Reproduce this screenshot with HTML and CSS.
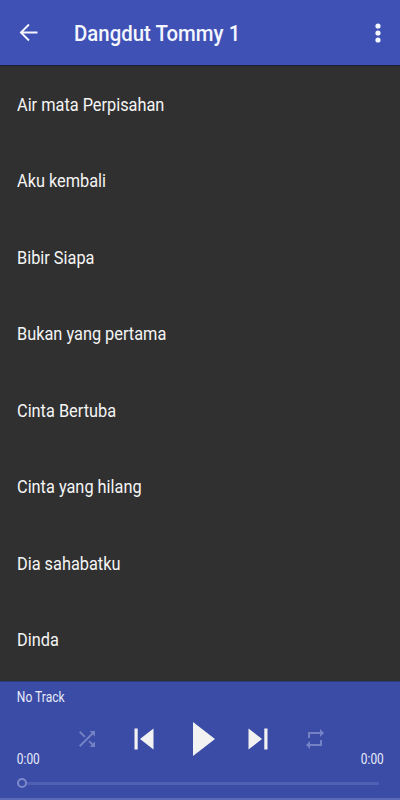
FILE: index.html
```html
<!DOCTYPE html>
<html lang="id">
<head>
  <meta charset="UTF-8" />
  <meta name="viewport" content="width=device-width, initial-scale=1.0" />
  <title>Dangdut Tommy 1</title>
  <link rel="stylesheet" href="styles.css">
</head>
<body>
  <div class="app">
    <header class="toolbar">
      <svg class="back" width="27" height="27" viewBox="0 0 24 24"><path d="M20 11.100H7.400l5.600-5.600-1.200-1.200L4.100 12l7.700 7.700 1.200-1.200-5.600-5.600H20z"/></svg>
      <h1 class="title"><span>Dangdut Tommy 1</span></h1>
      <svg class="more" width="24" height="24" viewBox="0 0 24 24"><circle cx="12" cy="5" r="2.600"/><circle cx="12" cy="12" r="2.600"/><circle cx="12" cy="19" r="2.600"/></svg>
    </header>

    <ul class="tracks">
      <li><span>Air mata Perpisahan</span></li>
      <li><span>Aku kembali</span></li>
      <li><span>Bibir Siapa</span></li>
      <li><span>Bukan yang pertama</span></li>
      <li><span>Cinta Bertuba</span></li>
      <li><span>Cinta yang hilang</span></li>
      <li><span>Dia sahabatku</span></li>
      <li><span>Dinda</span></li>
    </ul>

    <footer class="player">
      <div class="now">No Track</div>
      <div class="controls">
        <span class="time">0:00</span>
        <div class="buttons">
          <div class="cell"><svg class="dim" width="24" height="24" viewBox="0 0 24 24"><path d="M10.590 9.170L5.410 4 4 5.410l5.170 5.170 1.420-1.410zM14.500 4l2.040 2.040L4 18.590 5.410 20 17.960 7.460 20 9.500V4h-5.500zm.33 9.410l-1.410 1.410 3.130 3.130L14.500 20H20v-5.500l-2.040 2.040-3.130-3.130z"/></svg></div>
          <div class="cell"><svg width="24" height="24" viewBox="0 0 24 24"><path d="M2.500 1.500h3.200v21H2.500zM8 12L21.500 1.500v21z"/></svg></div>
          <div class="cell"><svg class="play" width="24" height="36" viewBox="0 0 24 36"><path d="M1 1l22 17L1 35z"/></svg></div>
          <div class="cell"><svg width="24" height="24" viewBox="0 0 24 24"><path d="M2.500 1.500L16 12 2.500 22.500zM18.300 1.500h3.200v21h-3.200z"/></svg></div>
          <div class="cell"><svg class="dim" width="24" height="24" viewBox="0 0 24 24"><path d="M7 7h10v3l4-4-4-4v3H5v6h2V7zm10 10H7v-3l-4 4 4 4v-3h12v-6h-2v4z"/></svg></div>
        </div>
        <span class="time">0:00</span>
      </div>
      <div class="seek">
        <span class="thumb"></span>
        <span class="rail"></span>
      </div>
    </footer>
  </div>
</body>
</html>
```

FILE: styles.css
```css
* {
  box-sizing: border-box;
}
body {
  margin: 0;
  font-family: Roboto, "Noto Sans", sans-serif;
  background-color: #303030;
}
.app {
  display: flex;
  flex-direction: column;
  height: 800px;
  overflow: hidden;
}
.toolbar {
  display: flex;
  align-items: center;
  flex: none;
  height: 65px;
  padding: 0 10px 0 15px;
  background-color: #3f51b5;
  color: #f4f6ff;
  box-shadow: 0 1px 1px rgba(20, 30, 60, 0.8);
}
.toolbar svg {
  fill: #f4f6ff;
  flex: none;
}
.title {
  flex: 1;
  margin: 2px 0 0 32px;
  font-size: 22px;
  font-weight: 500;
}
/* the reference text is narrower than Roboto at this height */
.title span {
  display: inline-block;
  transform: scaleX(0.927);
  transform-origin: left;
}
.tracks {
  flex: 1;
  margin: 0;
  padding: 1px 0 0;
  list-style: none;
  color: #f5f5f5;
  font-size: 18px;
}
.tracks li {
  display: flex;
  align-items: center;
  height: 76.5px;
  padding-left: 17px;
}
.tracks span {
  transform: scaleX(0.907);
  transform-origin: left;
}
.player {
  flex: none;
  height: 119px;
  padding: 7px 16px 0 16px;
  background-color: #3b4ca6;
  border-top: 1px solid #2b3a78;
  border-bottom: 2px solid #5a69b8;
  color: #e8ebfa;
}
.now {
  padding-left: 1px;
  font-size: 14px;
  line-height: 16px;
  transform: scaleX(0.86);
  transform-origin: left;
}
.controls {
  display: flex;
  align-items: flex-end;
  justify-content: space-between;
  height: 62px;
}
.time {
  width: 24px;
  padding-left: 1px;
  font-size: 14px;
  line-height: 16px;
  transform: scaleX(0.85);
  transform-origin: left;
}
.buttons {
  display: flex;
  align-self: flex-start;
  height: 60px;
  margin: 4px auto 0 18px;
}
.cell {
  display: flex;
  align-items: center;
  justify-content: center;
  width: 57px;
}
.buttons svg {
  fill: #f2f2f2;
}
.buttons svg.dim {
  fill: #7481c4;
}
.buttons svg.play {
  margin-left: 6px;
}
.seek {
  display: flex;
  align-items: center;
  margin-top: 11px;
  padding-left: 1px;
}
.thumb {
  flex: none;
  width: 10px;
  height: 10px;
  border: 2px solid #7c89cb;
  border-radius: 50%;
}
.rail {
  flex: 1;
  height: 3px;
  margin-right: 5px;
  background-color: #5061b5;
}
```
